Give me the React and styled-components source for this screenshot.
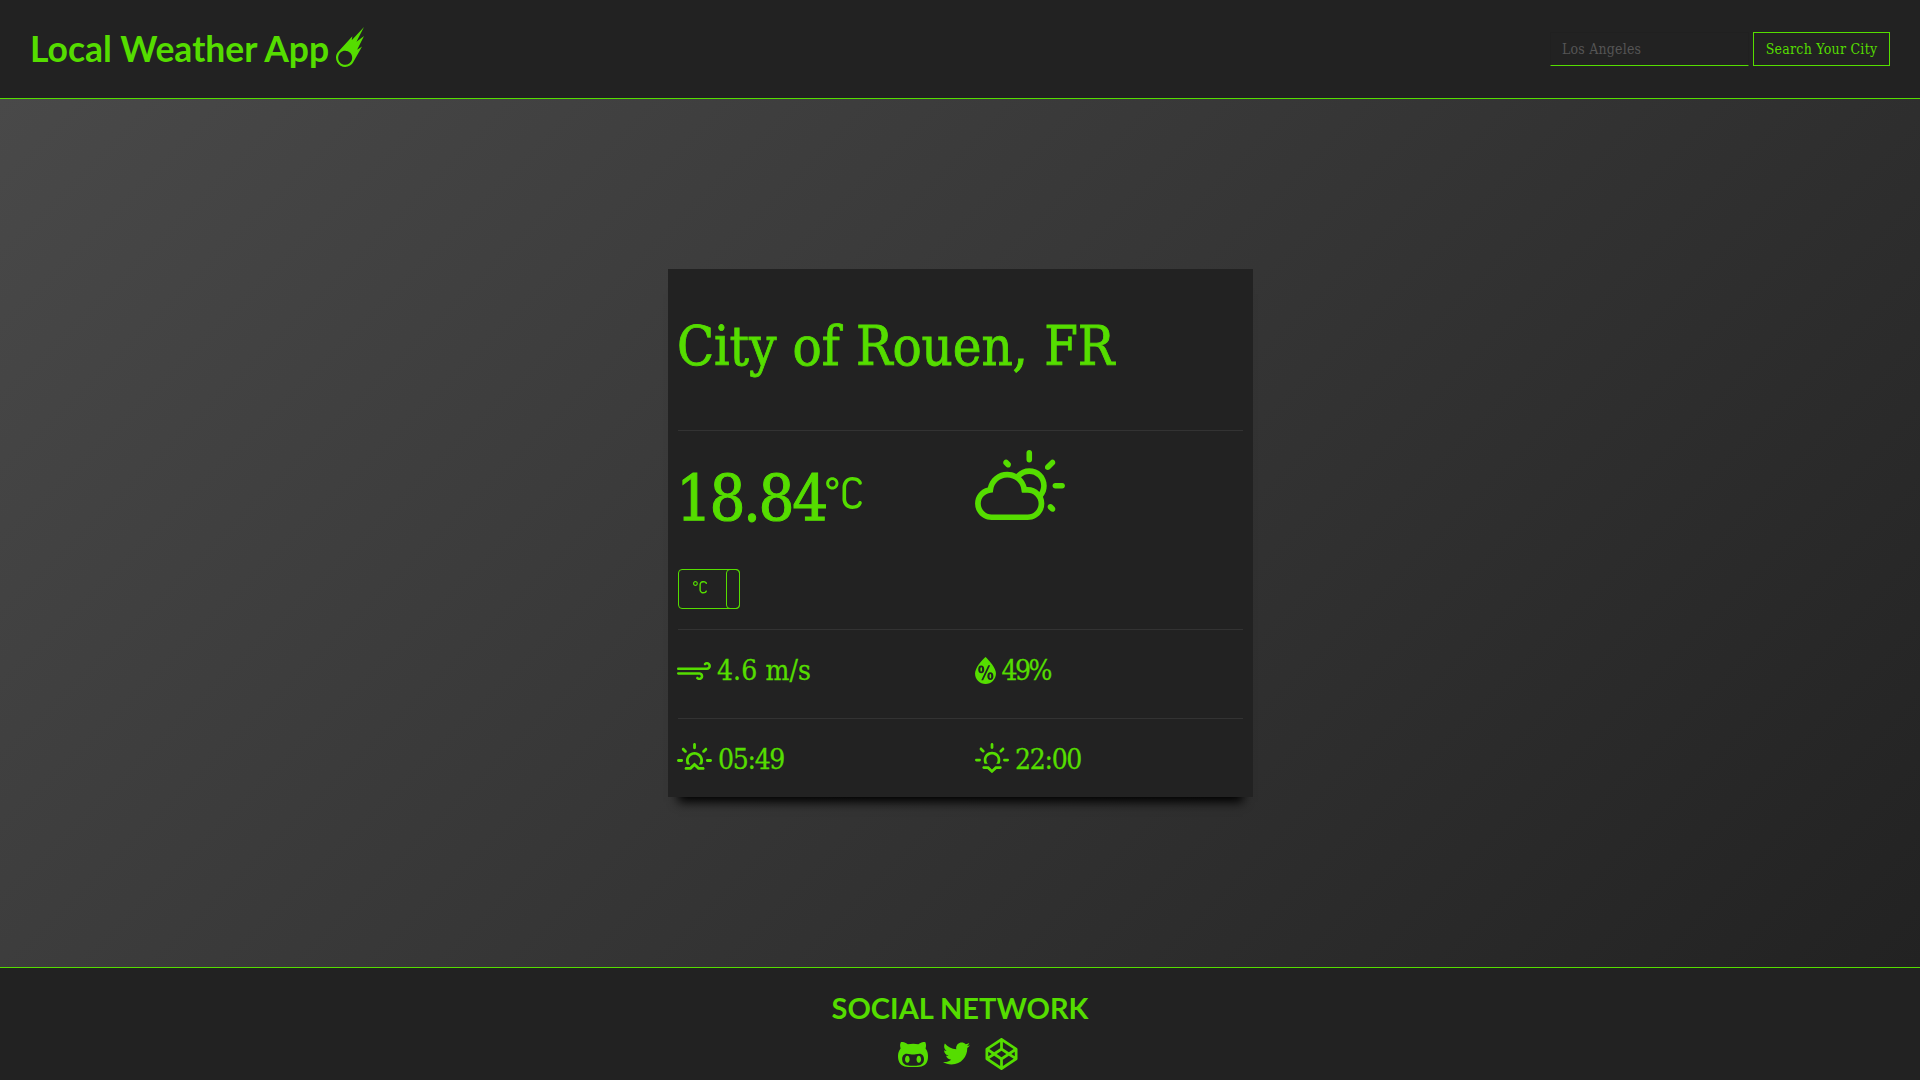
import React from "react";
import styled, { createGlobalStyle } from "styled-components";
import {
  WiMeteor,
  WiDayCloudy,
  WiStrongWind,
  WiHumidity,
  WiSunrise,
  WiSunset,
  WiCelsius,
} from "react-icons/wi";
import { FaGithubAlt, FaTwitter, FaCodepen } from "react-icons/fa";

const GREEN = "#55dd00";
const DARK = "#222222";
const SLAB = '"Roboto Slab", "DejaVu Serif Condensed", "DejaVu Serif", serif';

const GlobalStyle = createGlobalStyle`
  * { box-sizing: border-box; }
  body { margin: 0; background: ${DARK}; color: ${GREEN}; font-family: ${SLAB}; }
`;

const Page = styled.div`
  display: flex;
  flex-direction: column;
  height: 100vh;
  overflow: hidden;
`;

const Header = styled.header`
  display: flex;
  justify-content: space-between;
  align-items: center;
  flex: none;
  height: 99px;
  padding: 0 30px;
  background: ${DARK};
  border-bottom: 1px solid ${GREEN};
`;

const Brand = styled.h1`
  display: flex;
  align-items: center;
  gap: 7px;
  margin: 0;
  font: 700 35.5px/40px Lato, sans-serif;
  padding-bottom: 4px;
`;

const BrandName = styled.span`
  padding-top: 4px;
`;

const Glyph = styled.span`
  display: block;
  flex: none;
  width: ${(p) => p.$w}px;
  height: ${(p) => p.$h}px;
  margin-top: ${(p) => p.$top || 0}px;

  svg {
    display: block;
    width: 100%;
    height: 100%;
  }
`;

const Search = styled.form`
  display: flex;
  gap: 4px;
`;

const CityInput = styled.input`
  width: 199px;
  height: 34px;
  padding: 0 11px 1px;
  border: 1px solid #202020;
  border-bottom-color: ${GREEN};
  background: transparent;
  color: ${GREEN};
  font: 14px ${SLAB};
  letter-spacing: 0.2px;
  outline: none;

  &::placeholder {
    color: #555555;
    opacity: 1;
  }
`;

const SearchButton = styled.button`
  width: 137px;
  height: 34px;
  padding: 0 0 1px;
  border: 1px solid ${GREEN};
  background: transparent;
  color: ${GREEN};
  font: 14px ${SLAB};
  letter-spacing: 0.27px;
  white-space: nowrap;
`;

const Main = styled.main`
  flex: 1;
  display: flex;
  align-items: center;
  justify-content: center;
  padding-left: 1px;
  background: linear-gradient(135deg, #494949, ${DARK});
`;

const Card = styled.section`
  width: 585px;
  height: 528px;
  padding: 0 10px;
  background: ${DARK};
  box-shadow: 0 15px 10px -10px #000000;
`;

const Row = styled.div`
  display: grid;
  grid-template-columns: 297px 1fr;
  align-items: start;
  height: ${(p) => p.$h}px;
  padding-top: ${(p) => p.$top || 0}px;
  border-bottom: ${(p) => (p.$last ? "0" : "1px solid #333333")};
`;

const City = styled.h2`
  grid-column: 1 / -1;
  margin: 0 0 0 -1px;
  font: 400 54px/54px ${SLAB};
  word-spacing: 1px;
  letter-spacing: -0.1px;
  white-space: nowrap;
  -webkit-text-stroke: 0.8px ${GREEN};
`;

const Reading = styled.div`
  display: flex;
  align-items: flex-start;
`;

const Temperature = styled.span`
  margin: 17.5px 0 0.5px -2px;
  font-size: 63px;
  line-height: 63px;
  letter-spacing: -2.5px;
  -webkit-text-stroke: 1px ${GREEN};
`;

const Toggle = styled.button`
  display: flex;
  justify-content: space-between;
  width: 62px;
  height: 40px;
  margin-top: 38px;
  padding: 0;
  border: 1px solid ${GREEN};
  border-radius: 4px;
  background: transparent;
  color: ${GREEN};
`;

const ToggleLabel = styled.span`
  padding: 11px 0 0 13.5px;
`;

const ToggleKnob = styled.span`
  width: 14px;
  height: 40px;
  margin: -1px;
  border: 1px solid ${GREEN};
  border-radius: 4px;
`;

const Stat = styled.div`
  display: flex;
  align-items: flex-start;
  gap: ${(p) => p.$gap}px;
  margin-left: ${(p) => p.$shift || 0}px;
`;

const StatText = styled.span`
  margin-top: 14px;
  font-size: 28px;
  line-height: 28px;
  letter-spacing: ${(p) => p.$track}px;
  white-space: nowrap;
  -webkit-text-stroke: 0.3px ${GREEN};
`;

const Footer = styled.footer`
  display: flex;
  flex-direction: column;
  align-items: center;
  flex: none;
  height: 113px;
  padding-top: 22px;
  background: ${DARK};
  border-top: 1px solid ${GREEN};
`;

const FooterTitle = styled.h3`
  margin: 0;
  font: 700 29px/36px Lato, sans-serif;
`;

const Social = styled.nav`
  display: flex;
  align-items: flex-start;
  gap: 15px;
  margin: 12px 4px 0 0;
`;

export default function App() {
  return (
    <Page>
      <GlobalStyle />
      <Header>
        <Brand>
          <BrandName>Local Weather App</BrandName>
          <Glyph $w={28} $h={40}>
            <WiMeteor viewBox="7.09 2.35 15.52 22.1" />
          </Glyph>
        </Brand>
        <Search onSubmit={(e) => e.preventDefault()}>
          <CityInput placeholder="Los Angeles" />
          <SearchButton>Search Your City</SearchButton>
        </Search>
      </Header>

      <Main>
        <Card>
          <Row $h={162} $top={51}>
            <City>City of Rouen, FR</City>
          </Row>
          <Row $h={199} $top={19}>
            <div>
              <Reading>
                <Temperature>18.84</Temperature>
                <Glyph $w={36} $h={32} $top={27}>
                  <WiCelsius viewBox="9.75 9.12 10.46 9.36" />
                </Glyph>
              </Reading>
              <Toggle>
                <ToggleLabel>
                  <Glyph $w={14} $h={12.5}>
                    <WiCelsius viewBox="9.75 9.12 10.46 9.36" />
                  </Glyph>
                </ToggleLabel>
                <ToggleKnob />
              </Toggle>
            </div>
            <Glyph $w={90} $h={70}>
              <WiDayCloudy viewBox="1.56 0.91 26.88 20.94" />
            </Glyph>
          </Row>
          <Row $h={89} $top={13}>
            <Stat $gap={6} $shift={-1}>
              <Glyph $w={34} $h={18.2} $top={19}>
                <WiStrongWind viewBox="3.1 8.95 23.8 12.75" />
              </Glyph>
              <StatText $track={0.1}>4.6 m/s</StatText>
            </Stat>
            <Stat $gap={5.5}>
              <Glyph $w={21} $h={27} $top={14}>
                <WiHumidity viewBox="7.56 5.46 14.82 19.13" />
              </Glyph>
              <StatText $track={-2.5}>49%</StatText>
            </Stat>
          </Row>
          <Row $h={78} $top={13} $last>
            <Stat $gap={6} $shift={-1}>
              <Glyph $w={35} $h={26.8} $top={11}>
                <WiSunrise viewBox="2.75 3.11 24.5 18.76" />
              </Glyph>
              <StatText $track={-1.3}>05:49</StatText>
            </Stat>
            <Stat $gap={6}>
              <Glyph $w={34} $h={30} $top={11}>
                <WiSunset viewBox="2.88 3.35 24.25 21.42" />
              </Glyph>
              <StatText $track={-1.3}>22:00</StatText>
            </Stat>
          </Row>
        </Card>
      </Main>

      <Footer>
        <FooterTitle>SOCIAL NETWORK</FooterTitle>
        <Social>
          <Glyph $w={30} $h={25} $top={4}>
            <FaGithubAlt viewBox="0 64 480 384" preserveAspectRatio="none" />
          </Glyph>
          <Glyph $w={27} $h={23} $top={4}>
            <FaTwitter viewBox="0 48 512 416" />
          </Glyph>
          <Glyph $w={33} $h={32}>
            <FaCodepen />
          </Glyph>
        </Social>
      </Footer>
    </Page>
  );
}
